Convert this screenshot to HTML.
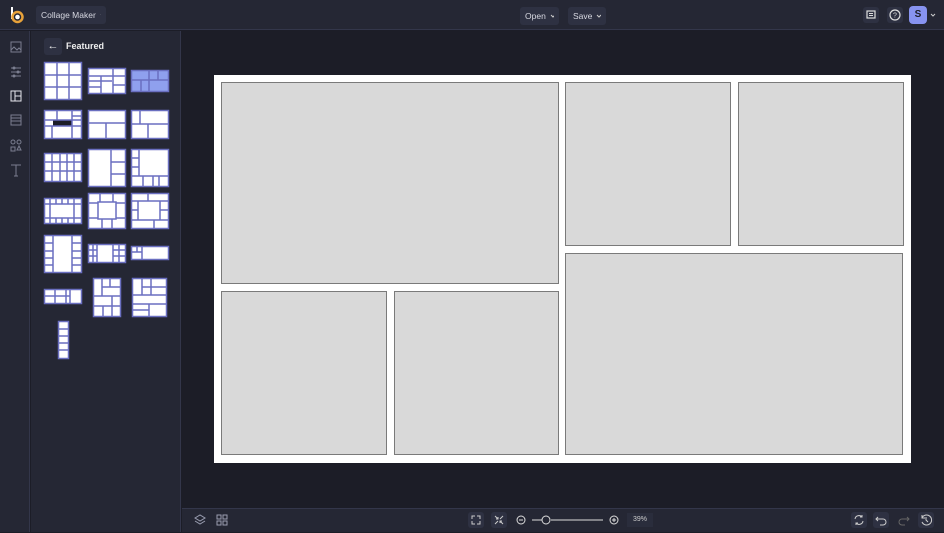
<!DOCTYPE html>
<html><head><style>
*{margin:0;padding:0;box-sizing:border-box}
body{width:944px;height:532px;background:#1c1d27;font-family:"Liberation Sans",sans-serif;position:relative;overflow:hidden;color:#e6e7ee}
.abs{position:absolute}
.top{left:0;top:0;width:944px;height:30px;background:#252734;border-bottom:1px solid #33364a}
.btn{position:absolute;background:#2e3142;border-radius:3px;font-size:8.5px;color:#d8d9e2;height:18px;line-height:18px;padding:0 5px;white-space:nowrap;overflow:hidden;display:flex;align-items:center;justify-content:space-between}
.btn svg{margin-left:4px}
.rail{left:0;top:31px;width:30px;height:501px;background:#252734;border-right:1px solid #33364a}
.panel{left:31px;top:31px;width:150px;height:501px;background:#252734;border-right:1px solid #33364a}
.bot{left:182px;top:508px;width:762px;height:24px;background:#252734;border-top:1px solid #33364a}
.cell{position:absolute;background:#d9d9d9;border:1px solid #7a7a7a}
svg.t{position:absolute}
.ib{position:absolute;width:16px;height:16px;background:#2e3142;border-radius:3px}
</style></head><body>
<div class="abs top"></div>
<div class="abs" style="left:9px;top:6px;width:16px;height:18px">
<svg width="16" height="18" viewBox="0 0 16 18"><rect x="2" y="1" width="2" height="12" fill="#fff"/><circle cx="8.5" cy="11" r="5" fill="none" stroke="#e8a23a" stroke-width="2.5"/><circle cx="8.5" cy="11" r="2.3" fill="#fff"/></svg></div>
<div class="btn" style="left:36px;top:6px;width:70px">Collage Maker<svg width="6" height="4"><path d="M1 1l2 2 2-2" stroke="#ccc" fill="none"/></svg></div>
<div class="btn" style="left:520px;top:7px;width:39px">Open<svg width="6" height="4"><path d="M1 1l2 2 2-2" stroke="#ccc" fill="none"/></svg></div>
<div class="btn" style="left:568px;top:7px;width:38px">Save<svg width="6" height="4"><path d="M1 1l2 2 2-2" stroke="#ccc" fill="none"/></svg></div>
<div class="ib" style="left:863px;top:7px"><svg width="16" height="16"><rect x="4" y="4" width="8" height="7" fill="none" stroke="#ddd" stroke-width="1.2"/><path d="M6 6.5h4M6 8.5h4" stroke="#ddd"/></svg></div>
<div class="ib" style="left:887px;top:7px"><svg width="16" height="16"><circle cx="8" cy="8" r="5" fill="none" stroke="#ddd" stroke-width="1.2"/><text x="8" y="10.5" font-size="7" fill="#ddd" text-anchor="middle" font-family="Liberation Sans">?</text></svg></div>
<div class="abs" style="left:909px;top:6px;width:18px;height:18px;background:#8793f0;border-radius:4px;color:#1c1d27;font-size:10px;font-weight:bold;text-align:center;line-height:18px">S</div>
<svg class="t" style="left:930px;top:13px" width="6" height="4"><path d="M1 1l2 2 2-2" stroke="#ccc" fill="none"/></svg>

<div class="abs rail"></div>
<svg class="t" style="left:9px;top:40px" width="14" height="140"><g fill="none" stroke="#7b7e90" stroke-width="1">
<rect x="2" y="2" width="10" height="10"/><path d="M2 10l3-3 3 3 2-2 2 2"/>
<path d="M2 28h10M2 32h10M2 36h10"/><circle cx="5" cy="28" r="1"/><circle cx="9" cy="32" r="1"/><circle cx="5" cy="36" r="1"/>
<rect x="2" y="51" width="10" height="10" stroke="#e6e7ee"/><path d="M6 51v10M6 56h6" stroke="#e6e7ee"/>
<rect x="2" y="75" width="10" height="10"/><path d="M2 78h10M2 81h10"/>
<circle cx="4" cy="102" r="2"/><circle cx="10" cy="102" r="2"/><rect x="2" y="107" width="4" height="4"/><path d="M10 106l2 4h-4z"/>
<path d="M2 125h10M7 125v11M5 136h4"/></g></svg>

<div class="abs panel"></div>
<div class="abs" style="left:44px;top:38px;width:18px;height:17px;background:#2e3142;border-radius:3px;color:#eee;font-size:11px;text-align:center;line-height:17px">←</div>
<div class="abs" style="left:66px;top:41px;font-size:9px;font-weight:bold;color:#eee">Featured</div>

<svg class="t" style="left:0;top:0" width="182" height="370"><g stroke="#6a6fc0" stroke-width="1.5" fill="#fff">
<rect x="44.5" y="62.5" width="37" height="37"/><path d="M57 63v36M69 63v36M45 75h36M45 87h36" fill="none"/>
<rect x="88.5" y="68.5" width="37" height="25"/><path d="M113 69v24M89 76h36M89 81h23M101 76v17M113 85h12M89 87h12" fill="none"/>
<rect x="131.5" y="70.5" width="37" height="21" fill="#8fa0ee"/><path d="M149 71v20M132 80h36M158 71v9M141 80v11" fill="none"/>
<rect x="44.5" y="110.5" width="37" height="28"/><rect x="53" y="120" width="19" height="6" fill="#1c1d27" stroke="none"/><path d="M72 111v27M45 120h36M45 126h36M72 116h9M57 111v9M52 126v12" fill="none"/>
<rect x="88.5" y="110.5" width="37" height="28"/><path d="M89 123h36M106 123v15" fill="none"/>
<rect x="131.5" y="110.5" width="37" height="28"/><path d="M132 124h36M148 124v14M140 111v13" fill="none"/>
<rect x="44.5" y="153.5" width="37" height="28"/><path d="M45 162h36M45 171h36M52 154v28M60 154v28M67 154v28M74 154v28" fill="none"/>
<rect x="88.5" y="149.5" width="37" height="37"/><path d="M111 150v36M111 162h14M111 174h14" fill="none"/>
<rect x="131.5" y="149.5" width="37" height="37"/><path d="M132 176h36M139 150v26M132 158h7M132 167h7M143 176v10M153 176v10M159 176v10" fill="none"/>
<rect x="44.5" y="198.5" width="37" height="25"/><path d="M45 204h36M45 218h36M50 199v25M56 199v5M62 199v5M68 199v5M74 199v25M56 218v5M62 218v5M68 218v5" fill="none"/>
<rect x="88.5" y="193.5" width="37" height="35"/><rect x="98" y="202" width="18" height="17"/><path d="M100 194v8M113 194v8M89 203h9M89 218h9M116 203h9M116 218h9M102 219v10M112 219v10" fill="none"/>
<rect x="131.5" y="193.5" width="37" height="35"/><path d="M132 201h36M132 220h36M138 201v19M160 201v19M148 193v8M154 220v9M132 210h6M160 210h8" fill="none"/>
<rect x="44.5" y="235.5" width="37" height="37"/><path d="M53 236v37M72 236v37M45 243h8M45 251h8M45 258h8M45 265h8M72 243h9M72 251h9M72 258h9M72 265h9" fill="none"/>
<rect x="88.5" y="244.5" width="37" height="18"/><path d="M97 245v18M113 245v18M89 250h8M89 256h8M113 250h12M113 256h12M93 245v18M119 245v18" fill="none"/>
<rect x="131.5" y="246.5" width="37" height="13"/><path d="M142 247v13M132 252h10M137 247v5" fill="none"/>
<rect x="44.5" y="289.5" width="37" height="14"/><path d="M55 290v14M66 290v14M45 296h10M66 296h4M70 290v14M55 296h11" fill="none"/>
<rect x="93.5" y="278.5" width="27" height="38"/><path d="M94 296h26M94 306h26M102 279v17M110 279v8M102 287h18M103 306v10M112 296v20" fill="none"/>
<rect x="132.5" y="278.5" width="34" height="38"/><path d="M133 295h33M133 304h33M142 279v16M151 279v16M142 287h24M149 304v13M133 310h16" fill="none"/>
<rect x="58.5" y="321.5" width="10" height="37"/><path d="M59 329h9M59 336h9M59 343h9M59 350h9" fill="none"/>
</g></svg>

<div class="abs" style="left:214px;top:75px;width:697px;height:388px;background:#fff"></div>
<div class="cell" style="left:221px;top:82px;width:338px;height:202px"></div>
<div class="cell" style="left:565px;top:82px;width:166px;height:164px"></div>
<div class="cell" style="left:738px;top:82px;width:166px;height:164px"></div>
<div class="cell" style="left:565px;top:253px;width:338px;height:202px"></div>
<div class="cell" style="left:221px;top:291px;width:166px;height:164px"></div>
<div class="cell" style="left:394px;top:291px;width:165px;height:164px"></div>

<div class="abs bot"></div>
<svg class="t" style="left:192px;top:512px" width="40" height="16"><g fill="none" stroke="#9a9db0"><path d="M3 6l5-3 5 3-5 3z M3 9l5 3 5-3"/><rect x="25" y="3" width="4" height="4"/><rect x="31" y="3" width="4" height="4"/><rect x="25" y="9" width="4" height="4"/><rect x="31" y="9" width="4" height="4"/></g></svg>
<div class="ib" style="left:468px;top:512px"><svg width="16" height="16" fill="none" stroke="#ccc"><path d="M4 7V4h3M9 4h3v3M12 9v3H9M7 12H4V9"/></svg></div>
<div class="ib" style="left:491px;top:512px"><svg width="16" height="16" fill="none" stroke="#ccc"><path d="M4 4l3 3M7 5v2H5M12 4l-3 3M4 12l3-3M12 12l-3-3M9 11V9h2"/></svg></div>
<svg class="t" style="left:514px;top:512px" width="110" height="16"><g fill="none" stroke="#ddd"><circle cx="7" cy="8" r="4"/><path d="M5 8h4"/><path d="M18 8h10M37 8h52" /><circle cx="32" cy="8" r="4"/><circle cx="100" cy="8" r="4"/><path d="M98 8h4M100 6v4"/></g></svg>
<div class="abs" style="left:627px;top:513px;width:26px;height:14px;background:#2a2d3c;font-size:7px;color:#ccc;text-align:center;line-height:14px">39%</div>
<div class="ib" style="left:851px;top:512px"><svg width="16" height="16" fill="none" stroke="#ccc"><path d="M4 7a4 4 0 0 1 7-2M12 9a4 4 0 0 1-7 2M11 3v2H9M5 13v-2h2"/></svg></div>
<div class="ib" style="left:873px;top:512px"><svg width="16" height="16" fill="none" stroke="#ccc"><path d="M5 5L3 7l2 2M3 7h7a3 3 0 0 1 0 6H7"/></svg></div>
<div class="ib" style="left:896px;top:512px;background:none"><svg width="16" height="16" fill="none" stroke="#666"><path d="M11 5l2 2-2 2M13 7H6a3 3 0 0 0 0 6h3"/></svg></div>
<div class="ib" style="left:918px;top:512px"><svg width="16" height="16" fill="none" stroke="#ccc"><path d="M4 6a5 5 0 1 1 0 4M4 3v3h3M8 5v3l2 2"/></svg></div>
</body></html>
